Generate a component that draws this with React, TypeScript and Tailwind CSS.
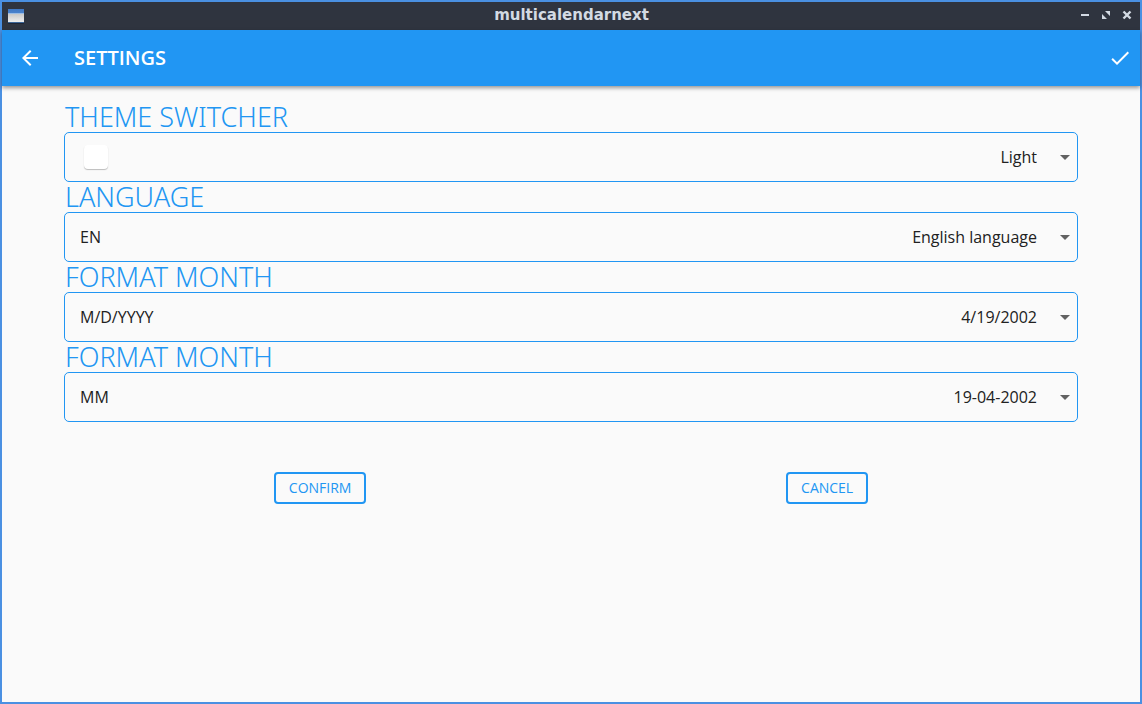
import { useId, useState } from "react";

type Option = { code: string; label: string };

type FieldProps = {
  title: string;
  options: Option[];
  swatches?: Record<string, string>;
};

function Field({ title, options, swatches }: FieldProps) {
  const id = useId();
  const [code, setCode] = useState(options[0].code);

  return (
    <div>
      <label
        htmlFor={id}
        className="block pl-px font-['Noto_Sans',sans-serif] text-[27px] leading-[30px] font-light text-[#2196f3] uppercase"
      >
        {title}
      </label>
      <div className="flex h-[50px] items-center rounded-[5px] border border-[#2196f3] pl-[15px] text-base text-[#212121]">
        {swatches ? (
          <span
            className={`ml-1 size-6 rounded-[4px] shadow-[0_1px_1px_rgba(0,0,0,0.25)] ${swatches[code]}`}
          />
        ) : (
          <span>{code}</span>
        )}
        <div className="grid flex-1 items-center self-stretch">
          <select
            id={id}
            value={code}
            onChange={(e) => setCode(e.target.value)}
            className="col-start-1 row-start-1 h-full w-full cursor-pointer appearance-none bg-transparent pr-10 text-right [text-align-last:right] outline-none"
          >
            {options.map((o) => (
              <option key={o.code} value={o.code}>
                {o.label}
              </option>
            ))}
          </select>
          <svg
            viewBox="0 0 24 24"
            className="pointer-events-none col-start-1 row-start-1 size-6 justify-self-end text-[#616161]"
            aria-hidden="true"
          >
            <path d="M7 10l5 5 5-5z" fill="currentColor" />
          </svg>
        </div>
      </div>
    </div>
  );
}

function TitleBar() {
  return (
    <div className="grid h-7 grid-cols-[1fr_auto_1fr] items-center bg-[#2f343f] pr-[5px] pl-[6px] text-[#d3dae3]">
      <svg viewBox="0 0 16 16" className="size-4" aria-hidden="true">
        <defs>
          <linearGradient id="app-body" x1="0" y1="0" x2="0" y2="1">
            <stop offset="0" stopColor="#c8c8c8" />
            <stop offset="1" stopColor="#eeeeee" />
          </linearGradient>
          <linearGradient id="app-head" x1="0" y1="0" x2="0" y2="1">
            <stop offset="0" stopColor="#3f78c4" />
            <stop offset="1" stopColor="#4a82cc" />
          </linearGradient>
        </defs>
        <rect y="14" width="16" height="2" fill="#1d2638" />
        <rect y="1" width="16" height="14" fill="#3b6597" />
        <rect y="1" width="16" height="4" fill="url(#app-head)" />
        <rect y="5" width="16" height="1" fill="#9dbde4" />
        <rect y="6" width="16" height="8" fill="url(#app-body)" />
      </svg>
      <span className="pb-[2px] font-['DejaVu_Sans',sans-serif] text-[15px] leading-5 font-bold">
        multicalendarnext
      </span>
      <div className="flex gap-[5px] justify-self-end">
        <button type="button" aria-label="Minimize">
          <svg viewBox="0 0 16 16" className="size-4">
            <path d="M4 6h8v2H4z" fill="currentColor" />
          </svg>
        </button>
        <button type="button" aria-label="Maximize">
          <svg viewBox="0 0 16 16" className="size-4" fill="currentColor">
            <path d="M7 3h5v5zM4 6l5 5H4z" />
          </svg>
        </button>
        <button type="button" aria-label="Close">
          <svg viewBox="0 0 16 16" className="size-4">
            <path d="M4.5 3.5l7 7M11.5 3.5l-7 7" stroke="currentColor" strokeWidth="2.4" />
          </svg>
        </button>
      </div>
    </div>
  );
}

export default function App() {
  return (
    <div className="flex min-h-screen flex-col border-2 border-[#4a90e2] bg-[#fafafa] font-['Open_Sans','Noto_Sans',sans-serif]">
      <TitleBar />
      <header className="flex h-14 items-center bg-[#2196f3] pr-2 pl-4 text-white shadow-[0_2px_4px_rgba(0,0,0,0.4)]">
        <button type="button" aria-label="Back">
          <svg viewBox="0 0 24 24" className="size-6" fill="currentColor">
            <path d="M20 11H7.83l5.59-5.59L12 4l-8 8 8 8 1.41-1.41L7.83 13H20v-2z" />
          </svg>
        </button>
        <h1 className="ml-8 flex-1 text-xl font-semibold">SETTINGS</h1>
        <button type="button" aria-label="Save">
          <svg viewBox="0 0 24 24" className="size-6" fill="currentColor">
            <path d="M9 16.17L4.83 12l-1.42 1.41L9 19 21 7l-1.41-1.41z" />
          </svg>
        </button>
      </header>
      <main className="px-[62px] pt-4">
        <Field
          title="Theme switcher"
          options={[
            { code: "light", label: "Light" },
            { code: "dark", label: "Dark" },
          ]}
          swatches={{ light: "bg-white", dark: "bg-[#303030]" }}
        />
        <Field
          title="Language"
          options={[
            { code: "EN", label: "English language" },
            { code: "FR", label: "French language" },
          ]}
        />
        <Field
          title="Format month"
          options={[
            { code: "M/D/YYYY", label: "4/19/2002" },
            { code: "D/M/YYYY", label: "19/4/2002" },
          ]}
        />
        <Field
          title="Format month"
          options={[
            { code: "MM", label: "19-04-2002" },
            { code: "MMM", label: "19-Apr-2002" },
          ]}
        />
        <div className="mt-[50px] flex justify-around text-sm font-medium text-[#2196f3]">
          <button type="button" className="h-8 rounded-[4px] border-2 border-[#2196f3] px-[13px]">
            CONFIRM
          </button>
          <button type="button" className="h-8 rounded-[4px] border-2 border-[#2196f3] px-[13px]">
            CANCEL
          </button>
        </div>
      </main>
    </div>
  );
}
